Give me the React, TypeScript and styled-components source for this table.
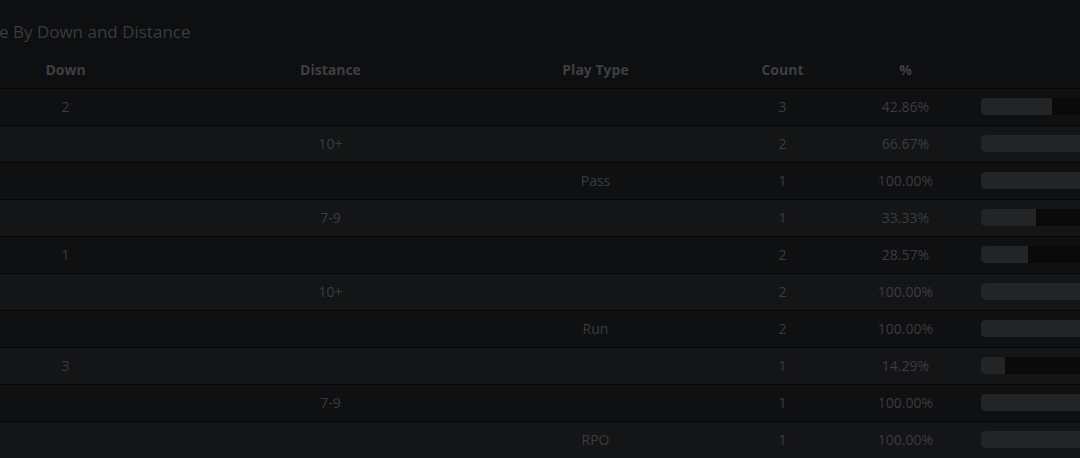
import React from "react";
import styled, { createGlobalStyle } from "styled-components";

const Global = createGlobalStyle`
  html, body {
    margin: 0;
    padding: 0;
    background: #0e0f11;
    overflow: hidden;
    width: 1080px;
    height: 458px;
  }
  body {
    font-family: "Open Sans", "Noto Sans", sans-serif;
  }
`;

const Page = styled.div`
  width: 1080px;
  height: 458px;
  overflow: hidden;
  padding-top: 20px;
  box-sizing: border-box;
`;

const Title = styled.h2`
  margin: 0 0 6px -1px;
  font-size: 17px;
  line-height: 24px;
  font-weight: 400;
  color: #3a3b3e;
  white-space: nowrap;
`;

const Table = styled.div`
  margin-left: -67px;
  width: 1300px;
`;

const cols = "265px 265px 265px 109px 137px 1fr";

const HeaderRow = styled.div`
  display: grid;
  grid-template-columns: ${cols};
  height: 39px;
  box-sizing: border-box;
  padding-top: 1px;
  align-items: center;
  border-bottom: 1px solid #070708;
`;

const HeadCell = styled.div`
  text-align: center;
  font-size: 14px;
  font-weight: 700;
  color: #3e3f42;
`;

const Row = styled.div<{ $alt: boolean }>`
  display: grid;
  grid-template-columns: ${cols};
  height: 37px;
  box-sizing: border-box;
  padding-bottom: 2px;
  align-items: center;
  background: ${(p) => (p.$alt ? "#141517" : "#0f1012")};
  border-bottom: 1px solid #070708;
`;

const Cell = styled.div`
  text-align: center;
  font-size: 14px;
  color: #3b3c3f;
`;

const BarCell = styled.div`
  padding-left: 7px;
`;

const Track = styled.div`
  width: 165px;
  height: 17px;
  border-radius: 4px;
  background: #0a0a0b;
  overflow: hidden;
`;

const Fill = styled.div`
  height: 100%;
  background: #232426;
  border-radius: 4px 0 0 4px;
`;

type R = { down?: string; dist?: string; play?: string; count: number; pct: number };

const rows: R[] = [
  { down: "2", count: 3, pct: 42.86 },
  { dist: "10+", count: 2, pct: 66.67 },
  { play: "Pass", count: 1, pct: 100 },
  { dist: "7-9", count: 1, pct: 33.33 },
  { down: "1", count: 2, pct: 28.57 },
  { dist: "10+", count: 2, pct: 100 },
  { play: "Run", count: 2, pct: 100 },
  { down: "3", count: 1, pct: 14.29 },
  { dist: "7-9", count: 1, pct: 100 },
  { play: "RPO", count: 1, pct: 100 },
];

export default function App() {
  return (
    <>
      <Global />
      <Page>
        <Title>e By Down and Distance</Title>
        <Table>
          <HeaderRow>
            <HeadCell>Down</HeadCell>
            <HeadCell>Distance</HeadCell>
            <HeadCell>Play Type</HeadCell>
            <HeadCell>Count</HeadCell>
            <HeadCell>%</HeadCell>
            <HeadCell />
          </HeaderRow>
          {rows.map((r, i) => (
            <Row key={i} $alt={i % 2 === 1}>
              <Cell>{r.down ?? ""}</Cell>
              <Cell>{r.dist ?? ""}</Cell>
              <Cell>{r.play ?? ""}</Cell>
              <Cell>{r.count}</Cell>
              <Cell>{r.pct.toFixed(2)}%</Cell>
              <BarCell>
                <Track>
                  <Fill style={{ width: `${r.pct}%` }} />
                </Track>
              </BarCell>
            </Row>
          ))}
        </Table>
      </Page>
    </>
  );
}
